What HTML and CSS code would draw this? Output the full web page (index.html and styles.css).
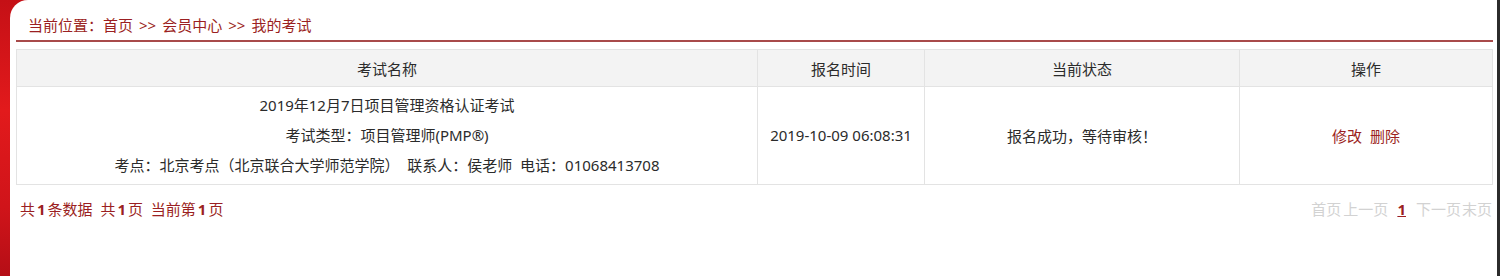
FILE: index.html
```html
<!DOCTYPE html>
<html lang="zh-CN">
<head>
  <meta charset="UTF-8">
  <title>我的考试</title>
  <link rel="stylesheet" href="styles.css">
</head>
<body>

<div class="frame">
  <!-- 当前位置 -->
  <div class="crumb">
    当前位置：<a href="#">首页</a><span class="sep">&gt;&gt;</span><a href="#">会员中心</a><span class="sep">&gt;&gt;</span><a href="#">我的考试</a>
  </div>

  <!-- 考试列表 -->
  <table class="exam-list">
    <colgroup>
      <col class="c-name">
      <col class="c-time">
      <col class="c-state">
      <col class="c-op">
    </colgroup>
    <thead>
      <tr>
        <th>考试名称</th>
        <th>报名时间</th>
        <th>当前状态</th>
        <th>操作</th>
      </tr>
    </thead>
    <tbody>
      <tr>
        <td class="info">
          <p>2019年12月7日项目管理资格认证考试</p>
          <p>考试类型：项目管理师(PMP®)</p>
          <p>考点：北京考点（北京联合大学师范学院）&nbsp; 联系人：侯老师&nbsp; 电话：01068413708</p>
        </td>
        <td>2019-10-09 06:08:31</td>
        <td>报名成功，等待审核！</td>
        <td class="ops"><a href="#">修改</a> <a href="#">删除</a></td>
      </tr>
    </tbody>
  </table>

  <!-- 分页 -->
  <div class="pager">
    <div class="count">共<b>1</b>条数据&nbsp; 共<b>1</b>页&nbsp; 当前第<b>1</b>页</div>
    <div class="pages">
      <span>首页</span><span class="prev">上一页</span><a class="cur" href="#">1</a><span>下一页</span><span class="last">末页</span>
    </div>
  </div>
</div>

</body>
</html>
```

FILE: styles.css
```css
/* Basic Styling */
html, body {
  height: 100%;
}
body {
  margin: 0;
  font-family: "Noto Sans", "Noto Sans CJK SC", sans-serif;
  font-size: 15px;
  color: #2b2b2b;
  background: linear-gradient(to bottom, #c51016 0%, #e21a1c 40%, #d0141a 75%, #b50e16 100%);
  overflow: hidden;
}
a {
  color: #9b1f22;
  text-decoration: none;
}
.frame {
  margin-left: 10px;
  height: 100%;
  background: #fff;
  border-top-left-radius: 18px;
  border-right: 3px solid #2b2b2b;
  padding: 0 4px 0 6px;
}
.crumb {
  padding: 10px 0 0 12px;
  line-height: 30px;
  color: #9b1f22;
  border-bottom: 2px solid #a84a4a;
}
.crumb .sep {
  margin: 0 6px;
}
table.exam-list {
  width: 100%;
  margin-top: 7px;
  border-collapse: collapse;
  table-layout: fixed;
}
col.c-name { width: 741px; }
col.c-time { width: 167px; }
col.c-state { width: 315px; }
th, td {
  border: 1px solid #e3e3e3;
  text-align: center;
  font-weight: normal;
}
th {
  height: 36px;
  padding: 0;
  background-color: #f3f3f3;
}
td {
  padding: 3px 0 4px;
}
td.info p {
  margin: 0;
  line-height: 30px;
}
td.ops a {
  margin: 0 2px;
}
.pager {
  display: flex;
  justify-content: space-between;
  align-items: center;
  margin-top: 11px;
  padding: 0 1px 0 4px;
  line-height: 26px;
}
.count {
  color: #9b1f22;
}
.count b {
  margin: 0 2px;
}
.pages {
  color: #d2d2d2;
}
.pages .prev {
  margin-left: 2px;
}
.pages .last {
  margin-left: 1px;
}
.pages a.cur {
  margin: 0 10px 0 9px;
  font-weight: bold;
  text-decoration: underline;
}
```
